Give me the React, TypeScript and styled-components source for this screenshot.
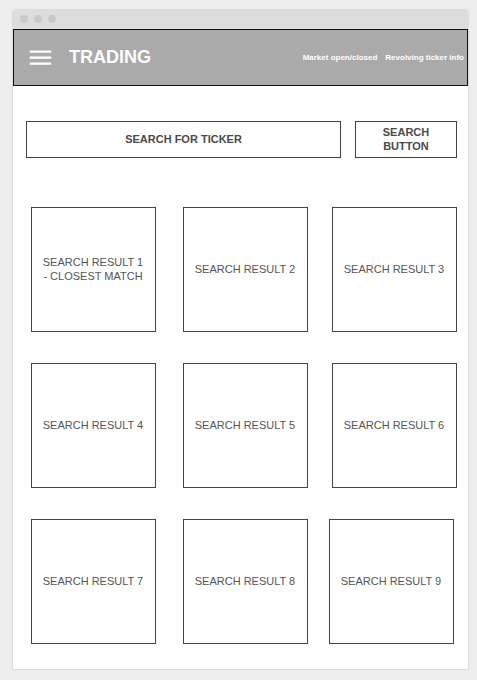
import React from "react";
import styled, { createGlobalStyle } from "styled-components";

const GlobalStyle = createGlobalStyle`
  *, *::before, *::after { box-sizing: border-box; }
  body {
    margin: 0;
    background: #eeeeee;
    color: #555555;
    font-family: "Liberation Sans", Arial, sans-serif;
    font-size: 11px;
    line-height: 14px;
  }
`;

const Page = styled.div`
  padding: 9px 8px 10px 12px;
`;

const Window = styled.div`
  background: #ffffff;
  border: 1px solid #dddddd;
  border-top: 0;
  border-radius: 4px 4px 0 0;
  box-shadow: 0 0 2px rgba(0, 0, 0, 0.06);
  overflow: hidden;
`;

const TitleBar = styled.div`
  display: flex;
  align-items: center;
  gap: 6px;
  height: 20px;
  padding: 0 0 1px 7px;
  background: #dddddd;
`;

const Dot = styled.span`
  width: 8px;
  height: 8px;
  border-radius: 50%;
  background: #c9c9c9;
`;

const Header = styled.header`
  display: flex;
  align-items: center;
  height: 57px;
  padding: 0 3px 0 15px;
  background: #aaaaaa;
  border: 1px solid #111111;
  color: #ffffff;
`;

const MenuButton = styled.button`
  display: flex;
  padding: 0;
  border: 0;
  background: none;
  color: inherit;
  cursor: pointer;
`;

const Title = styled.h1`
  margin: 0 auto 0 17px;
  padding-bottom: 2px;
  font-size: 18px;
  line-height: 20px;
`;

const Status = styled.div`
  display: flex;
  gap: 8px;
  font-size: 8px;
  line-height: 10px;
  font-weight: bold;
  white-space: nowrap;
`;

const SearchForm = styled.form`
  display: flex;
  gap: 14px;
  padding: 35px 11px 0 13px;
`;

const SearchInput = styled.input`
  flex: 1;
  min-width: 0;
  height: 37px;
  padding: 0 8px 2px;
  border: 1px solid #444444;
  border-radius: 0;
  background: #ffffff;
  color: #4a4a4a;
  font: inherit;
  font-weight: bold;
  text-align: center;

  &::placeholder {
    color: #4a4a4a;
    opacity: 1;
  }
`;

const SearchButton = styled.button`
  width: 102px;
  height: 37px;
  padding: 0 20px 2px;
  border: 1px solid #444444;
  background: #ffffff;
  color: #4a4a4a;
  font: inherit;
  font-weight: bold;
  cursor: pointer;
`;

const Results = styled.section`
  display: grid;
  gap: 31px;
  padding: 49px 11px 25px 18px;
`;

const ResultRow = styled.div<{ $gap: number; $inset: number }>`
  display: flex;
  padding-right: ${(p) => p.$inset}px;

  > :first-child { margin-right: 27px; }
  > :nth-child(2) { margin-right: ${(p) => p.$gap}px; }
`;

const ResultCard = styled.article`
  display: flex;
  flex: 1;
  align-items: center;
  justify-content: center;
  min-width: 0;
  aspect-ratio: 1;
  padding: 0 9px 2px 8px;
  border: 1px solid #444444;
  text-align: center;
`;

const rows = [
  { gap: 24, inset: 0, items: ["SEARCH RESULT 1 - CLOSEST MATCH", "SEARCH RESULT 2", "SEARCH RESULT 3"] },
  { gap: 24, inset: 0, items: ["SEARCH RESULT 4", "SEARCH RESULT 5", "SEARCH RESULT 6"] },
  { gap: 21, inset: 3, items: ["SEARCH RESULT 7", "SEARCH RESULT 8", "SEARCH RESULT 9"] },
];

export default function App() {
  return (
    <>
      <GlobalStyle />
      <Page>
        <Window>
          <TitleBar>
            <Dot />
            <Dot />
            <Dot />
          </TitleBar>
          <Header>
            <MenuButton type="button" aria-label="Menu">
              <svg width="23" height="16" viewBox="0 0 23 16" fill="none" stroke="currentColor" strokeWidth="2.4" aria-hidden="true">
                <path d="M.7 1.6h21.6M.7 7.6h21.6M.7 13.6h21.6" />
              </svg>
            </MenuButton>
            <Title>TRADING</Title>
            <Status>
              <span>Market open/closed</span>
              <span>Revolving ticker info</span>
            </Status>
          </Header>
          <main>
            <SearchForm onSubmit={(e) => e.preventDefault()}>
              <SearchInput type="text" aria-label="Search for ticker" placeholder="SEARCH FOR TICKER" />
              <SearchButton type="submit">SEARCH BUTTON</SearchButton>
            </SearchForm>
            <Results aria-label="Search results">
              {rows.map((row) => (
                <ResultRow key={row.items[0]} $gap={row.gap} $inset={row.inset}>
                  {row.items.map((item) => (
                    <ResultCard key={item}>{item}</ResultCard>
                  ))}
                </ResultRow>
              ))}
            </Results>
          </main>
        </Window>
      </Page>
    </>
  );
}
